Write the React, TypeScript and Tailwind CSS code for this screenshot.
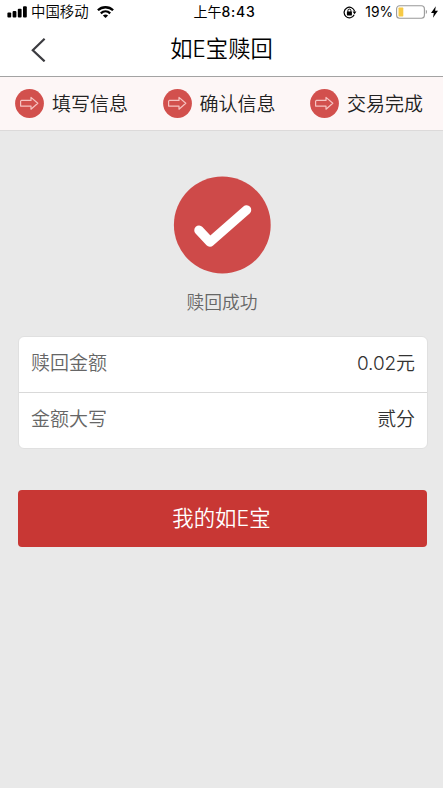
import React from 'react';

const steps = ['填写信息', '确认信息', '交易完成'];

const details = [
  { label: '赎回金额', value: '0.02元' },
  { label: '金额大写', value: '贰分' },
];

const StatusBar: React.FC = () => (
  <div className="h-6 grid grid-cols-3 items-center text-[14.4px] leading-6 text-black">
    {/* Carrier */}
    <div className="flex items-center pl-[7px]">
      <svg className="w-5 h-3 shrink-0" viewBox="0 0 20 12" fill="currentColor">
        <rect x="0.4" y="6.6" width="3.8" height="5" rx="1" />
        <rect x="5.6" y="5" width="3.8" height="6.6" rx="1" />
        <rect x="10.8" y="2.8" width="3.8" height="8.8" rx="1" />
        <rect x="16" y="0.2" width="3.8" height="11.4" rx="1" />
      </svg>
      <span className="ml-1 whitespace-nowrap font-[350]">中国移动</span>
      <svg className="w-[17px] h-3 ml-2 mb-px shrink-0" viewBox="0 0 17 12" fill="none" stroke="currentColor" strokeWidth="2.3">
        <path d="M0.9 4.3 C5.1 0.2 11.9 0.2 16.1 4.3" />
        <path d="M3.8 7.3 C6.5 4.8 10.5 4.8 13.2 7.3" />
        <path d="M8.5 12 L5.9 9.4 C7.4 8.1 9.6 8.1 11.1 9.4 Z" fill="currentColor" stroke="none" />
      </svg>
    </div>

    <div className="text-center whitespace-nowrap pl-[6px] text-[14px]">
      上午<span className="font-[Inter] font-medium leading-none tracking-[0.7px]">8:43</span>
    </div>

    {/* Battery */}
    <div className="flex items-center justify-end pr-[5px]">
      <svg className="w-[14px] h-[13px] shrink-0" viewBox="0 0 14 13" fill="none" stroke="currentColor" strokeWidth="1.2">
        <path d="M11.2 8.8 A5.3 5.3 0 1 1 11.6 5.4" />
        <path d="M9.6 5.6 L13.4 5.6 L11.5 8.2 Z" fill="currentColor" stroke="none" />
        <rect x="3.9" y="5.6" width="5" height="3.8" rx="0.4" fill="currentColor" stroke="none" />
        <path d="M4.9 6 V4.6 A1.5 1.5 0 0 1 7.9 4.6 V6" strokeWidth="1" />
      </svg>
      <span className="ml-2 font-[Inter] text-[13.8px]">19%</span>
      <svg className="w-8 h-[14px] ml-[3px] shrink-0" viewBox="0 0 32 14" fill="none">
        <rect x="0.6" y="0.7" width="27.8" height="12.6" rx="3" stroke="#999999" strokeWidth="1.1" />
        <rect x="2.5" y="2.6" width="4.8" height="8.8" rx="0.6" fill="#f7ca45" />
        <path d="M29.8 4.8 C31.4 5.4 31.4 8.4 29.8 9 Z" fill="#999999" />
      </svg>
      <svg className="w-[7px] h-3 ml-[3px] shrink-0" viewBox="0 0 7 12" fill="currentColor">
        <path d="M4.8 0.2 L0 6.9 H2.8 L2 11.8 L7 4.8 H4.1 Z" />
      </svg>
    </div>
  </div>
);

const StepIcon: React.FC = () => (
  <svg className="w-[29px] h-[29px] shrink-0" viewBox="0 0 29 29" fill="none">
    <circle cx="14.5" cy="14.5" r="14.4" fill="#d2504d" />
    <path
      d="M6.4 11.4 H16 V8.4 L22.8 14.3 L16 20.2 V17.1 H5.6 V12.2 Z"
      stroke="#f6c3c1"
      strokeWidth="1.2"
      strokeLinejoin="round"
    />
  </svg>
);

export default function App() {
  return (
    <div className="min-h-screen bg-[#e9e9e9] font-['Liberation_Sans','Noto_Sans_CJK_SC',sans-serif]">
      <header className="bg-white border-b border-[#a3a3a3]">
        <StatusBar />
        <div className="h-[52px] grid grid-cols-[60px_1fr_60px] items-center">
          <button className="pl-[31px]" aria-label="返回">
            <svg className="w-[15px] h-6" viewBox="0 0 15 24" fill="none" stroke="#3c3c40" strokeWidth="2.2">
              <path d="M13.6 0.8 L1.8 12.2 L13.6 23.4" />
            </svg>
          </button>
          <h1 className="text-center text-[22.3px] leading-8 text-black font-[350]">
            如<span className="font-[Inter] leading-none">E</span>宝赎回
          </h1>
        </div>
      </header>

      {/* Steps */}
      <div className="h-[54px] flex items-center gap-[34.5px] pl-[15px] bg-[#fdf6f6] border-b border-[#dcdada]">
        {steps.map((step) => (
          <div key={step} className="flex items-center gap-2">
            <StepIcon />
            <span className="w-[76px] pt-0.5 whitespace-nowrap text-[19px] leading-7 text-[#222222] font-[350]">{step}</span>
          </div>
        ))}
      </div>

      <main className="pl-[18px] pr-4 pt-[45px]">
        {/* Result */}
        <div className="flex flex-col items-center pr-[1px]">
          <svg className="w-[98px] h-[98px]" viewBox="0 0 98 98" fill="none">
            <circle cx="49.3" cy="49" r="48.4" fill="#ce4a49" />
            <path d="M26 54.3 L37 66 L73.5 34" stroke="#ffffff" strokeWidth="9.5" strokeLinecap="round" strokeLinejoin="round" />
          </svg>
          <p className="mt-[15px] text-[17.8px] leading-7 text-[#666666] font-[350]">赎回成功</p>
        </div>

        <div className="mt-[19px] -mr-px bg-white border border-[#e0e0e0] rounded-md divide-y divide-[#d9d9d9]">
          {details.map((item) => (
            <div key={item.label} className="h-[55px] first:h-14 flex items-center justify-between px-3 first:pb-px text-[19px] font-[350]">
              <span className="text-[#666666]">{item.label}</span>
              <span className="text-[#333333] font-['Inter','Noto_Sans_CJK_SC',sans-serif] tracking-[-0.1px]">{item.value}</span>
            </div>
          ))}
        </div>

        <button className="mt-[41px] w-full h-[57px] rounded bg-[#c83734] pt-px pr-0.5 text-[21.4px] text-white font-[350]">
          我的如<span className="font-[Inter] font-light leading-none">E</span>宝
        </button>
      </main>
    </div>
  );
}
